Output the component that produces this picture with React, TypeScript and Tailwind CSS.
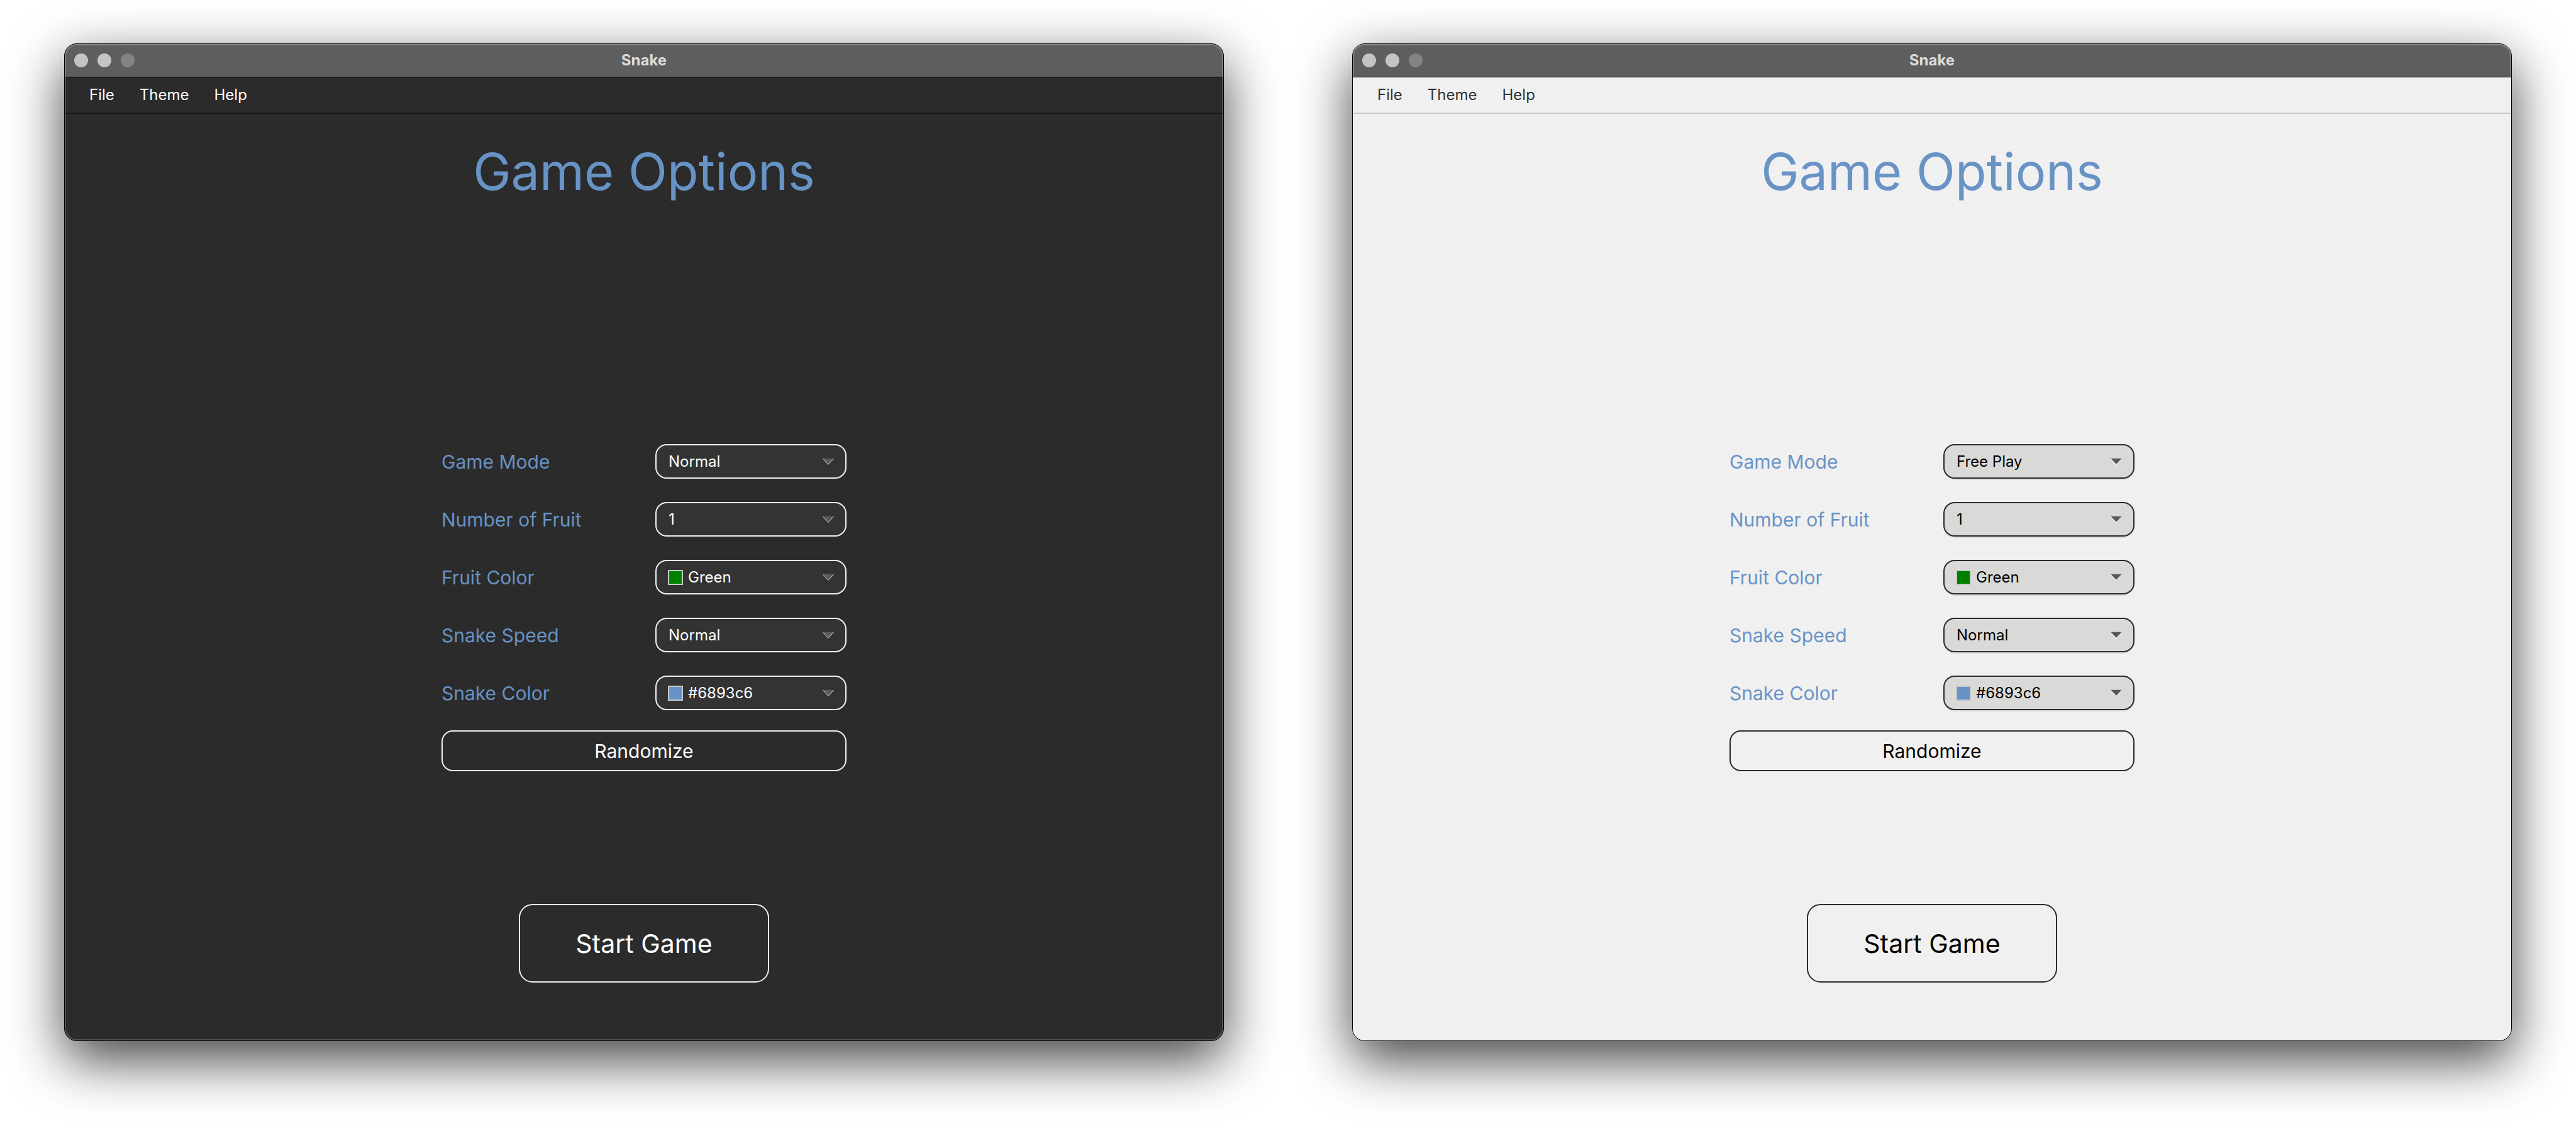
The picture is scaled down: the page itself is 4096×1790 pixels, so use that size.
import { useId, useState } from 'react';
import clsx from 'clsx';

type Theme = 'dark' | 'light';

interface Field {
  label: string;
  value: string;
  options: string[];
  swatch?: boolean;
}

const SWATCH_COLORS: Record<string, string> = {
  Green: '#008000',
  '#6893c6': '#6893c6',
};

const fieldsFor = (mode: string): Field[] => [
  { label: 'Game Mode', value: mode, options: ['Normal', 'Free Play'] },
  { label: 'Number of Fruit', value: '1', options: ['1'] },
  { label: 'Fruit Color', value: 'Green', options: ['Green'], swatch: true },
  { label: 'Snake Speed', value: 'Normal', options: ['Normal'] },
  { label: 'Snake Color', value: '#6893c6', options: ['#6893c6'], swatch: true },
];

function ArrowIcon({ theme }: { theme: Theme }) {
  return (
    <svg
      viewBox="0 0 20 12"
      className="pointer-events-none absolute top-1/2 right-5 h-[11px] w-[18px] -translate-y-1/2"
      aria-hidden="true"
    >
      {theme === 'dark' ? (
        <>
          <path d="M0 0H20L10 11Z" fill="#5a5a5a" />
          <path d="M0.5 0.5L10 11L19.5 0.5" fill="none" stroke="#e2e2e2" strokeWidth="1" />
        </>
      ) : (
        <>
          <path d="M0 1H20L10 12Z" fill="#ffffff" />
          <path d="M0 0H20L10 10.5Z" fill="#595959" />
        </>
      )}
    </svg>
  );
}

function OptionRow({ field, theme }: { field: Field; theme: Theme }) {
  const id = useId();
  const [value, setValue] = useState(field.value);
  const dark = theme === 'dark';
  return (
    <div className="grid grid-cols-[340px_304px] items-center">
      <label htmlFor={id} className="text-[30px] leading-[40px] text-[#6893c6]">
        {field.label}
      </label>
      <div className="relative">
        <select
          id={id}
          value={value}
          onChange={(e) => setValue(e.target.value)}
          className={clsx(
            'block h-[55px] w-full appearance-none rounded-[18px] border-2 text-[24px] leading-[32px]',
            field.swatch ? 'pl-[50px]' : 'pl-[19px]',
            dark
              ? 'border-[#efefef] bg-[#333333] text-white'
              : 'border-[#2b2b2b] bg-[#d9d9d7] text-black shadow-[0_2px_0_#dedede]',
          )}
        >
          {field.options.map((option) => (
            <option key={option}>{option}</option>
          ))}
        </select>
        {field.swatch && (
          <span
            className="pointer-events-none absolute top-1/2 left-5 size-6 -translate-y-1/2 border-2 border-[#c8c8c8]"
            style={{ backgroundColor: SWATCH_COLORS[value] }}
          />
        )}
        <ArrowIcon theme={theme} />
      </div>
    </div>
  );
}

function GameWindow({ theme, mode }: { theme: Theme; mode: string }) {
  const dark = theme === 'dark';
  const outline = dark
    ? 'border-[#efefef] text-white'
    : 'border-[#2b2b2b] text-black';
  return (
    <section
      className={clsx(
        'relative flex flex-col overflow-hidden rounded-[20px] border border-black shadow-[0_30px_86px_rgba(0,0,0,0.74)]',
        dark ? 'bg-[#2b2b2b]' : 'bg-[#f0f0f0]',
      )}
    >
      <header className="grid h-[53px] grid-cols-[1fr_auto_1fr] items-center border-b border-black bg-[#5e5e5e] px-[15px]">
        <div className="flex gap-[15px]">
          <button type="button" aria-label="Close" className="size-[22px] rounded-full bg-[#c4c4c4]" />
          <button type="button" aria-label="Minimize" className="size-[22px] rounded-full bg-[#c4c4c4]" />
          <button type="button" aria-label="Zoom" className="size-[22px] rounded-full bg-[#838383]" />
        </div>
        <span className="text-[24px] leading-[32px] font-bold text-[#dcdcdc]">Snake</span>
      </header>

      <nav
        className={clsx(
          'flex h-[58px] items-center gap-10 border-b-2 px-[39px] text-[24px] leading-[32px]',
          dark ? 'border-[#161616] text-white' : 'border-[#c8c8c8] text-[#333333]',
        )}
      >
        <button type="button">File</button>
        <button type="button">Theme</button>
        <button type="button">Help</button>
      </nav>

      <main className="flex flex-1 flex-col items-center">
        <h1 className="mt-[40px] text-[81px] leading-[104px] text-[#6893c6]">Game Options</h1>
        <form className="mt-[381px] flex flex-col gap-[37px]" onSubmit={(e) => e.preventDefault()}>
          {fieldsFor(mode).map((field) => (
            <OptionRow key={field.label} field={field} theme={theme} />
          ))}
          <button
            type="button"
            className={clsx('-mt-[5px] h-[65px] rounded-[18px] border-2 text-[30px] leading-[40px]', outline)}
          >
            Randomize
          </button>
        </form>
        <button
          type="button"
          className={clsx('mt-[211px] h-[125px] w-[398px] rounded-[22px] border-2 text-[41px] leading-[52px]', outline)}
        >
          Start Game
        </button>
      </main>

      <div className="pointer-events-none absolute inset-0 rounded-[19px] border-2 border-[#ffffff33] border-t-[#ffffff40]" />
    </section>
  );
}

export default function App() {
  return (
    <div className="grid min-h-screen grid-cols-2 gap-x-[204px] bg-white px-[102px] pt-[69px] pb-[135px] font-['Inter',sans-serif]">
      <GameWindow theme="dark" mode="Normal" />
      <GameWindow theme="light" mode="Free Play" />
    </div>
  );
}
